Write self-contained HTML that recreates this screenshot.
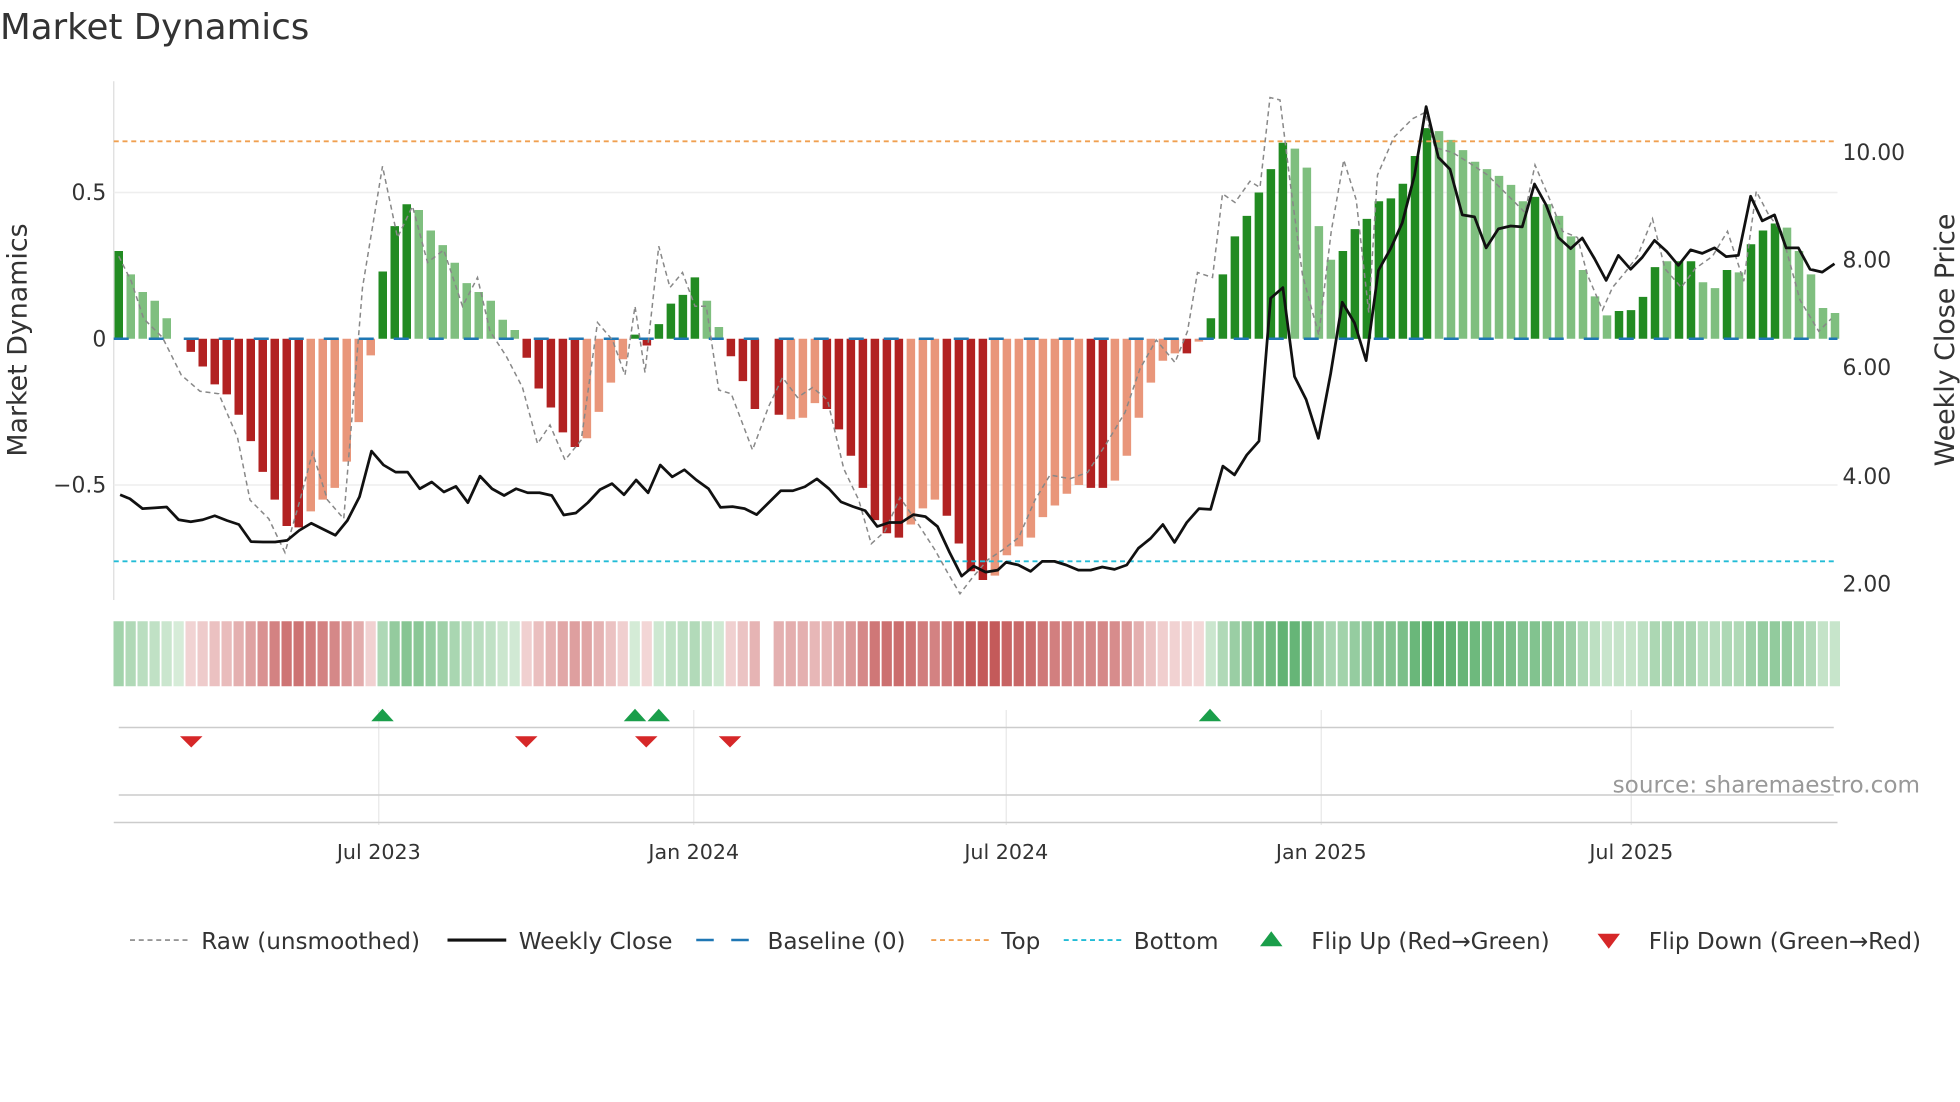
<!DOCTYPE html>
<html><head><meta charset="utf-8">
<style>
html,body{margin:0;padding:0;background:#fff;}
svg{display:block;font-family:"DejaVu Sans","Liberation Sans",sans-serif;}
</style></head>
<body>
<svg id="s" width="1960" height="1102" viewBox="0 0 1568 881.6" xmlns="http://www.w3.org/2000/svg">
<rect width="1568" height="882" fill="#fff"/>
<text x="0" y="31" font-size="28.5" fill="#333">Market Dynamics</text>
<line x1="91" y1="65" x2="91" y2="480" stroke="#ddd" stroke-width="1"/>
<line x1="91" y1="154" x2="1470" y2="154" stroke="#eee" stroke-width="1.2"/>
<line x1="91" y1="388" x2="1470" y2="388" stroke="#eee" stroke-width="1.2"/>
<g font-size="17.5" fill="#333" text-anchor="end">
<text x="85" y="160">0.5</text><text x="85" y="277">0</text><text x="85" y="394">−0.5</text>
</g>
<g font-size="17.5" fill="#333">
<text x="1474" y="128">10.00</text><text x="1474" y="214">8.00</text><text x="1474" y="300">6.00</text><text x="1474" y="387">4.00</text><text x="1474" y="473">2.00</text>
</g>
<text transform="translate(21,272) rotate(-90)" font-size="21.5" fill="#333" text-anchor="middle">Market Dynamics</text>
<text transform="translate(1563,272) rotate(-90)" font-size="21.5" fill="#333" text-anchor="middle">Weekly Close Price</text>
<g id="bars"></g>
<g id="heat"></g>
<line x1="91" y1="113" x2="1470" y2="113" stroke="#f0a050" stroke-width="1.5" stroke-dasharray="4,3"/>
<line x1="91" y1="449" x2="1470" y2="449" stroke="#22bcd6" stroke-width="1.5" stroke-dasharray="4,3"/>
<line x1="91" y1="271" x2="1470" y2="271" stroke="#1f77b4" stroke-width="2" stroke-dasharray="12,16"/>
<polyline id="raw" fill="none" stroke="#888" stroke-width="1.2" stroke-dasharray="4,3"/>
<polyline id="price" fill="none" stroke="#111" stroke-width="2.2" stroke-linejoin="round"/>
<g stroke="#e8e8e8" stroke-width="1">
<line x1="303" y1="568" x2="303" y2="660"/><line x1="555" y1="568" x2="555" y2="660"/><line x1="805" y1="568" x2="805" y2="660"/><line x1="1057" y1="568" x2="1057" y2="660"/><line x1="1305" y1="568" x2="1305" y2="660"/>
</g>
<line x1="95" y1="582" x2="1467" y2="582" stroke="#ccc" stroke-width="1.2"/>
<line x1="95" y1="636" x2="1467" y2="636" stroke="#ccc" stroke-width="1.2"/>
<line x1="91" y1="658" x2="1470" y2="658" stroke="#ccc" stroke-width="1.2"/>
<g fill="#1a9e4a">
<polygon points="297,577 306,567 315,577"/><polygon points="499,577 508,567 517,577"/><polygon points="518,577 527,567 536,577"/><polygon points="959,577 968,567 977,577"/>
</g>
<g fill="#d62728">
<polygon points="144,589 162,589 153,598"/><polygon points="412,589 430,589 421,598"/><polygon points="508,589 526,589 517,598"/><polygon points="575,589 593,589 584,598"/>
</g>
<text x="1536" y="634" font-size="18.5" fill="#999" text-anchor="end">source: sharemaestro.com</text>
<g font-size="16.5" fill="#333" text-anchor="middle">
<text x="303" y="687">Jul 2023</text><text x="555" y="687">Jan 2024</text><text x="805" y="687">Jul 2024</text><text x="1057" y="687">Jan 2025</text><text x="1305" y="687">Jul 2025</text>
</g>
<g font-size="18.5" fill="#333">
<line x1="104" y1="752" x2="150" y2="752" stroke="#888" stroke-width="1.3" stroke-dasharray="4,3"/><text x="161" y="759">Raw (unsmoothed)</text>
<line x1="358" y1="752" x2="405" y2="752" stroke="#111" stroke-width="2.5"/><text x="415" y="759">Weekly Close</text>
<line x1="557" y1="752" x2="604" y2="752" stroke="#1f77b4" stroke-width="2" stroke-dasharray="14,14"/><text x="614" y="759">Baseline (0)</text>
<line x1="745" y1="752" x2="791" y2="752" stroke="#f0a050" stroke-width="1.5" stroke-dasharray="4,3"/><text x="801" y="759">Top</text>
<line x1="851" y1="752" x2="897" y2="752" stroke="#22bcd6" stroke-width="1.5" stroke-dasharray="4,3"/><text x="907" y="759">Bottom</text>
<polygon points="1008,757 1017,745 1026,757" fill="#1a9e4a"/><text x="1049" y="759">Flip Up (Red→Green)</text>
<polygon points="1278,747 1296,747 1287,759" fill="#d62728"/><text x="1319" y="759">Flip Down (Green→Red)</text>
</g>
</svg>
<script>
(function(){
var NS='http://www.w3.org/2000/svg';
function el(parent,tag,attrs){var e=document.createElementNS(NS,tag);for(var k in attrs)e.setAttribute(k,attrs[k]);parent.appendChild(e);return e;}
var D='D',L='L',R='R',S='S';
var v=[[.30,D],[.22,L],[.16,L],[.13,L],[.07,L],[0,L],[-.045,R],[-.095,R],[-.156,R],[-.19,R],[-.26,R],[-.35,R],[-.455,R],[-.55,R],[-.64,R],[-.645,R],[-.59,S],[-.55,S],[-.51,S],[-.42,S],[-.285,S],[-.057,S],
[.23,D],[.385,D],[.46,D],[.44,L],[.37,L],[.32,L],[.26,L],[.19,L],[.16,L],[.13,L],[.065,L],[.03,L],
[-.065,R],[-.17,R],[-.235,R],[-.32,R],[-.37,R],[-.34,S],[-.25,S],[-.15,S],[-.07,S],[.014,D],[-.023,R],[.05,D],[.12,D],[.15,D],[.21,D],[.13,L],[.04,L],
[-.06,R],[-.145,R],[-.24,R],[null,R],
[-.26,R],[-.275,S],[-.27,S],[-.22,S],[-.24,R],[-.31,R],[-.40,R],[-.51,R],[-.62,R],[-.665,R],[-.68,R],[-.635,S],[-.58,S],[-.55,S],[-.605,R],[-.70,R],[-.795,R],[-.825,R],[-.81,S],
[-.74,S],[-.71,S],[-.68,S],[-.61,S],[-.57,S],[-.53,S],[-.50,S],[-.51,R],[-.51,R],[-.485,S],[-.40,S],[-.27,S],[-.15,S],[-.075,S],[-.05,S],[-.05,R],[-.01,S],
[.07,D],[.22,D],[.35,D],[.42,D],[.50,D],[.58,D],[.67,D],[.65,L],[.585,L],[.385,L],[.27,L],[.30,D],[.375,D],[.41,D],[.47,D],[.48,D],[.53,D],[.625,D],[.72,D],[.71,L],[.68,L],[.645,L],[.605,L],[.58,L],[.557,L],[.526,L],[.47,L],[.485,D],[.46,L],[.42,L],[.35,L],[.235,L],[.145,L],[.08,L],[.095,D],[.098,D],[.143,D],[.245,D],[.265,L],[.265,D],[.265,D],[.193,L],[.173,L],[.235,D],[.227,L],[.323,D],[.37,D],[.394,D],[.38,L],[.30,L],[.22,L],[.105,L],[.088,L]];
var N=v.length,step=1373/(N-1),col={D:'#228b22',L:'#7fbf7f',R:'#b22222',S:'#e9967a'};
var gb=document.getElementById('bars'),gh=document.getElementById('heat');
function mix(a,c,t){return 'rgb('+a.map(function(x,i){return Math.round(x+(c[i]-x)*t)}).join(',')+')';}
for(var i=0;i<N;i++){var x=95+i*step,val=v[i][0];if(val===null)continue;
 var y=271-val*234;var ty=Math.min(y,271),hh=Math.abs(271-y);
 if(hh>0.3)el(gb,'rect',{x:(x-3.4).toFixed(1),y:ty.toFixed(1),width:6.8,height:hh.toFixed(1),fill:col[v[i][1]]});
 var t=Math.min(1,Math.abs(val)/0.8);
 var c=val>=0?mix([214,236,216],[76,168,96],t):mix([244,218,218],[196,90,90],t);
 el(gh,'rect',{x:(x-4.2).toFixed(1),y:497,width:8.2,height:52,fill:c});}
var p1=[[35,1045],[52,1055],[74,1080],[95,1078],[116,1076],[137,1108],[158,1113],[179,1108],[200,1098],[221,1110],[242,1120],[263,1163],[284,1164],[305,1164],[326,1160],[347,1135],[368,1117],[389,1132],[410,1147],[431,1110],[452,1050],[473,935],[494,970],[515,988],[536,988],[557,1030],[578,1013],[599,1038],[620,1024],[641,1065],[662,998],[683,1030],[704,1047],[725,1030],[745,1040],[766,1040],[787,1047],[808,1096],[829,1091],[850,1065],[871,1032],[892,1017],[913,1045],[934,1008],[955,1040],[976,970],[997,1000],[1018,982],[1039,1008],[1060,1030],[1081,1077],[1102,1075],[1123,1080],[1144,1095],[1165,1065],[1186,1035],[1207,1035],[1228,1025],[1249,1005],[1270,1030],[1291,1063],[1312,1075],[1333,1085],[1354,1125],[1375,1115],[1396,1115],[1417,1095],[1438,1100],[1459,1125],[1480,1190],[1501,1250],[1522,1225],[1543,1240],[1564,1235]];
var p2=[[10,1215],[30,1222],[50,1238],[69,1213],[89,1213],[108,1222],[128,1235],[148,1235],[167,1227],[187,1233],[207,1222],[226,1180],[246,1155],[266,1120],[285,1165],[305,1115],[325,1080],[344,1082],[364,973],[383,995],[403,945],[423,910],[442,550],[462,523],[481,747],[500,805],[520,903],[540,740],[559,560],[579,612],[598,707],[618,480],[638,425],[657,360],[677,240],[696,67],[716,195],[735,225],[755,340],[775,345],[794,423],[814,375],[834,368],[853,370],[873,262],[892,315],[912,397],[932,425],[951,398],[971,450],[990,505],[1010,442],[1030,477],[1049,447],[1069,404],[1089,432],[1108,467],[1128,428],[1147,437],[1167,423],[1186,445],[1206,442],[1226,293],[1245,355],[1265,340],[1284,423],[1304,423],[1323,477],[1343,484],[1363,463]];
var pts=p1.map(function(p){return (0.4592*p[0]+80).toFixed(1)+','+(64+p[1]*0.3175).toFixed(1)}).concat(p2.map(function(p){return (0.4898*p[0]+800).toFixed(1)+','+(64+p[1]*0.3175).toFixed(1)}));
document.getElementById('price').setAttribute('points',pts.join(' '));
var raw=[[95,205],[105,225],[115,255],[130,270],[145,300],[160,313],[175,315],[190,350],[200,400],[215,415],[228,442],[240,400],[250,362],[262,400],[275,415],[290,230],[306,133],[318,190],[330,165],[342,210],[355,200],[370,245],[382,222],[392,265],[405,285],[418,310],[430,355],[440,340],[452,368],[465,352],[478,258],[490,272],[500,300],[508,245],[516,298],[527,197],[536,230],[546,218],[556,245],[565,245],[575,312],[585,315],[602,360],[615,325],[626,302],[638,318],[650,310],[662,320],[675,375],[687,400],[697,435],[708,425],[720,398],[735,420],[748,440],[758,458],[768,475],[778,462],[790,448],[802,440],[815,430],[828,400],[840,380],[856,383],[870,378],[885,355],[900,330],[912,295],[925,272],[940,290],[950,265],[958,218],[970,222],[978,155],[988,162],[1000,145],[1008,150],[1016,78],[1024,80],[1032,145],[1042,220],[1055,268],[1065,185],[1075,128],[1085,160],[1095,250],[1102,140],[1115,110],[1130,95],[1140,90],[1148,118],[1162,122],[1175,130],[1190,140],[1200,150],[1210,160],[1220,170],[1228,132],[1240,160],[1250,185],[1262,190],[1270,220],[1282,248],[1290,230],[1300,218],[1310,205],[1322,175],[1332,215],[1345,230],[1356,215],[1370,205],[1382,185],[1395,225],[1405,153],[1415,172],[1425,185],[1440,240],[1455,265],[1465,255]];
document.getElementById('raw').setAttribute('points',raw.map(function(p){return p.join(',')}).join(' '));
})();
</script>
</body></html>
